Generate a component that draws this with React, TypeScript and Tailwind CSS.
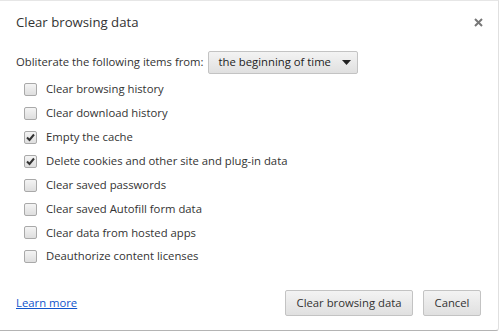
import { useState } from 'react';

const items = [
  { label: 'Clear browsing history', checked: false },
  { label: 'Clear download history', checked: false },
  { label: 'Empty the cache', checked: true },
  { label: 'Delete cookies and other site and plug-in data', checked: true },
  { label: 'Clear saved passwords', checked: false },
  { label: 'Clear saved Autofill form data', checked: false },
  { label: 'Clear data from hosted apps', checked: false },
  { label: 'Deauthorize content licenses', checked: false },
];

const Checkbox = ({ checked }: { checked: boolean }) => (
  <span className="w-[13px] h-[13px] rounded-[2px] border border-[#a9a9a9] bg-gradient-to-b from-[#f4f4f4] to-[#dedede] flex items-center justify-center shrink-0">
    {checked && (
      <svg width="9" height="9" viewBox="0 0 9 9">
        <path d="M1 4.5 L3.5 7 L8 1.5" fill="none" stroke="#333" strokeWidth="2" />
      </svg>
    )}
  </span>
);

export default function App() {
  const [rows] = useState(items);
  return (
    <div
      className="w-[499px] h-[331px] bg-white border-t border-t-[#e6e6e6] border-b border-b-[#b4b4b4] border-r border-r-[#e0e0e0] rounded-br-[3px] flex flex-col text-[#333] overflow-hidden"
      style={{ fontFamily: '"Open Sans", "Noto Sans", sans-serif' }}
    >
      {/* Header */}
      <div className="flex items-center justify-between pl-4 pr-[15px] pt-[10px] h-[31px]">
        <h1 className="text-[13.2px] leading-[20px] text-[#333]">Clear browsing data</h1>
        <svg width="9" height="9" viewBox="0 0 9 9" className="mt-[2px]">
          <path d="M1 1 L8 8 M8 1 L1 8" stroke="#777" strokeWidth="2" />
        </svg>
      </div>

      {/* Time range */}
      <div className="flex items-center pl-4 mt-[19px] text-[11.3px]">
        <span>Obliterate the following items from:</span>
        <div className="ml-[4px] w-[150px] h-[23px] border border-[#c3c3c3] rounded-[2px] bg-gradient-to-b from-[#f3f3f3] to-[#e0e0e0] flex items-center justify-between pl-[10px] pr-[6px]">
          <span className="text-[#222]">the beginning of time</span>
          <svg width="9" height="5" viewBox="0 0 9 5">
            <path d="M0 0 H9 L4.5 5 Z" fill="#222" />
          </svg>
        </div>
      </div>

      {/* Checkboxes */}
      <ul className="mt-[4px] pl-6 text-[11.3px]">
        {rows.map((r) => (
          <li key={r.label} className="h-[23.85px] flex items-center gap-[9px]">
            <Checkbox checked={r.checked} />
            <span>{r.label}</span>
          </li>
        ))}
      </ul>

      {/* Footer */}
      <div className="mt-auto mb-[14px] flex items-center pl-4 pr-[17px] text-[11.3px]">
        <a href="#" className="text-[#1155cc] underline mt-[1px]">Learn more</a>
        <div className="ml-auto flex gap-[10px]">
          <button className="w-[128px] h-[26px] border border-[#c3c3c3] rounded-[2px] bg-gradient-to-b from-[#f3f3f3] to-[#e0e0e0] text-[#333]">
            Clear browsing data
          </button>
          <button className="w-[58px] h-[26px] border border-[#c3c3c3] rounded-[2px] bg-gradient-to-b from-[#f3f3f3] to-[#e0e0e0] text-[#333]">
            Cancel
          </button>
        </div>
      </div>
    </div>
  );
}
